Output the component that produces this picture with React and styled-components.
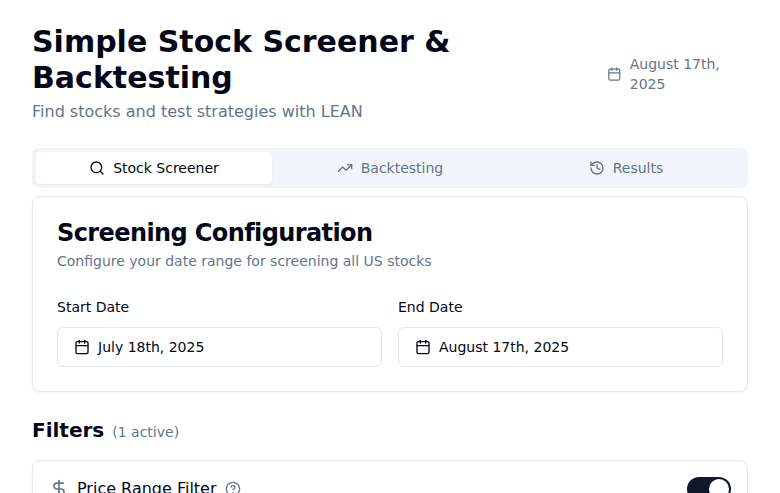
import React from "react";
import styled, { createGlobalStyle } from "styled-components";
import { Calendar, Search, TrendingUp, History, DollarSign, CircleHelp } from "lucide-react";

const GlobalStyle = createGlobalStyle`
  *, *::before, *::after { box-sizing: border-box; }
  html, body { margin: 0; background: #fff; }
  body {
    font-family: "DejaVu Sans", sans-serif;
    font-size: 16px;
    line-height: 24px;
    color: #020817;
    height: 493px;
    overflow: hidden;
  }
  h1, h2, h3, p { margin: 0; }
  button { font: inherit; color: inherit; cursor: pointer; }
  svg { display: block; }
`;

const Page = styled.main`
  padding: 24px 32px 0;
`;

const Header = styled.header`
  display: flex;
  align-items: center;
  justify-content: space-between;
`;

const Title = styled.h1`
  font-size: 30px;
  line-height: 36px;
  font-weight: 700;
`;

const Subtitle = styled.p`
  margin-top: 4px;
  color: #64748b;
`;

const Today = styled.div`
  display: flex;
  align-items: center;
  gap: 8px;
  color: #64748b;
  font-size: 14px;
  line-height: 20px;
`;

const TabList = styled.div`
  display: grid;
  grid-template-columns: repeat(3, 1fr);
  height: 40px;
  margin-top: 24px;
  padding: 4px;
  border-radius: 6px;
  background: #f1f5f9;
`;

const Tab = styled.button`
  display: flex;
  align-items: center;
  justify-content: center;
  gap: 8px;
  padding: 0;
  border: 0;
  border-radius: 4px;
  font-size: 14px;
  line-height: 20px;
  font-weight: 500;
  color: ${(p) => (p.$active ? "#020817" : "#64748b")};
  background: ${(p) => (p.$active ? "#fff" : "transparent")};
  box-shadow: ${(p) => (p.$active ? "0 1px 2px rgba(0, 0, 0, 0.05)" : "none")};
`;

const Card = styled.section`
  border: 1px solid #e2e8f0;
  border-radius: 8px;
  background: #fff;
  box-shadow: 0 1px 2px rgba(0, 0, 0, 0.05);
`;

const ConfigCard = styled(Card)`
  margin-top: 8px;
  padding: 24px;
`;

const CardTitle = styled.h2`
  font-size: 24px;
  line-height: 24px;
  font-weight: 600;
  letter-spacing: -0.6px;
`;

const CardText = styled.p`
  margin-top: 6px;
  font-size: 14px;
  line-height: 20px;
  color: #64748b;
`;

const DateGrid = styled.div`
  display: grid;
  grid-template-columns: 1fr 1fr;
  gap: 16px;
  margin-top: 24px;
`;

const Field = styled.div`
  display: flex;
  flex-direction: column;
  gap: 8px;
  font-size: 14px;
  line-height: 24px;
`;

const DateButton = styled.button`
  display: flex;
  align-items: center;
  gap: 8px;
  height: 40px;
  padding: 0 16px;
  border: 1px solid #e2e8f0;
  border-radius: 6px;
  background: #fff;
  line-height: 20px;
`;

const FiltersHeader = styled.div`
  display: flex;
  align-items: center;
  gap: 8px;
  margin-top: 24px;
`;

const FiltersTitle = styled.h3`
  font-size: 20px;
  line-height: 28px;
  font-weight: 600;
`;

const Count = styled.span`
  padding-top: 4px;
  font-size: 14px;
  line-height: 20px;
  color: #64748b;
`;

const FilterCard = styled(Card)`
  display: flex;
  align-items: center;
  justify-content: space-between;
  margin-top: 16px;
  padding: 16px;
`;

const FilterName = styled.div`
  display: flex;
  align-items: center;
  gap: 8px;
  svg { color: #64748b; }
`;

const Switch = styled.button`
  width: 44px;
  height: 24px;
  padding: 2px;
  border: 0;
  border-radius: 12px;
  background: #0f172a;
`;

const Thumb = styled.span`
  display: block;
  width: 20px;
  height: 20px;
  margin-left: auto;
  border-radius: 50%;
  background: #fff;
`;

const tabs = [
  { label: "Stock Screener", Icon: Search },
  { label: "Backtesting", Icon: TrendingUp },
  { label: "Results", Icon: History },
];

const dates = [
  { label: "Start Date", value: "July 18th, 2025" },
  { label: "End Date", value: "August 17th, 2025" },
];

export default function App() {
  return (
    <Page>
      <GlobalStyle />
      <Header>
        <div>
          <Title>Simple Stock Screener &amp; Backtesting</Title>
          <Subtitle>Find stocks and test strategies with LEAN</Subtitle>
        </div>
        <Today>
          <Calendar size={16} />
          <span>August 17th, 2025</span>
        </Today>
      </Header>
      <TabList role="tablist">
        {tabs.map(({ label, Icon }, i) => (
          <Tab key={label} role="tab" $active={i === 0}>
            <Icon size={16} />
            {label}
          </Tab>
        ))}
      </TabList>
      <ConfigCard>
        <CardTitle>Screening Configuration</CardTitle>
        <CardText>Configure your date range for screening all US stocks</CardText>
        <DateGrid>
          {dates.map(({ label, value }) => (
            <Field key={label}>
              <span>{label}</span>
              <DateButton>
                <Calendar size={16} />
                {value}
              </DateButton>
            </Field>
          ))}
        </DateGrid>
      </ConfigCard>
      <FiltersHeader>
        <FiltersTitle>Filters</FiltersTitle>
        <Count>(1 active)</Count>
      </FiltersHeader>
      <FilterCard>
        <FilterName>
          <DollarSign size={20} />
          <span>Price Range Filter</span>
          <CircleHelp size={16} />
        </FilterName>
        <Switch role="switch" aria-checked="true" aria-label="Price Range Filter">
          <Thumb />
        </Switch>
      </FilterCard>
    </Page>
  );
}
